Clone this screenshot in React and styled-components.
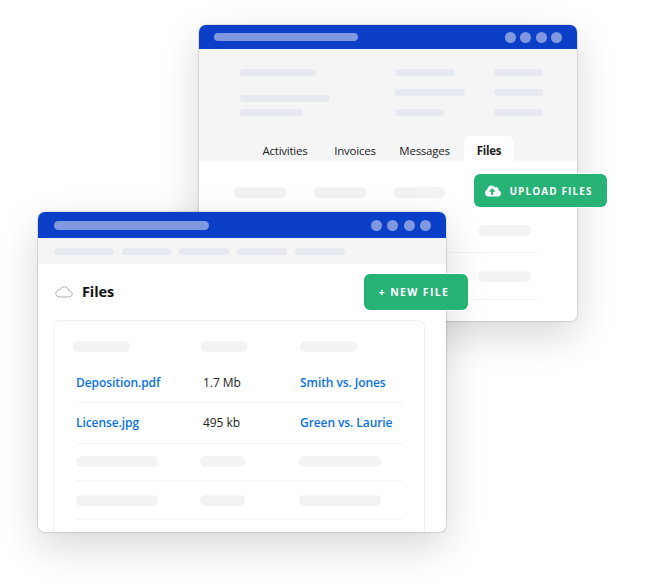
import React from "react";
import styled, { createGlobalStyle } from "styled-components";
import { FaCloudUploadAlt } from "react-icons/fa";

const Global = createGlobalStyle`
  html, body { margin: 0; padding: 0; background: #fff; }
  body { font-family: "Open Sans", "Liberation Sans", sans-serif; }
  * { box-sizing: border-box; }
`;

const Canvas = styled.div`
  position: relative;
  width: 645px;
  height: 585px;
  overflow: hidden;
  background: #fff;
`;

const Win = styled.div`
  position: absolute;
  left: ${(p) => p.$x}px;
  top: ${(p) => p.$y}px;
  width: ${(p) => p.$w}px;
  height: ${(p) => p.$h}px;
  display: flex;
  flex-direction: column;
  background: #fff;
  border-radius: 7px;
  overflow: hidden;
`;

const WinShadow = styled.div`
  position: absolute;
  left: ${(p) => p.$x}px;
  top: ${(p) => p.$y}px;
  width: ${(p) => p.$w}px;
  height: ${(p) => p.$h}px;
  border-radius: 7px;
  box-shadow: 0 0 1.5px rgba(0, 0, 0, 0.5), 0 14px 40px rgba(0, 0, 0, 0.16);
`;

const TitleBar = styled.div`
  flex: none;
  height: ${(p) => p.$h}px;
  display: flex;
  align-items: center;
  justify-content: space-between;
  padding: 0 ${(p) => p.$right}px 0 ${(p) => p.$left}px;
  background: #0c3fc8;
`;

const TitleStub = styled.div`
  width: ${(p) => p.$w}px;
  height: ${(p) => p.$h}px;
  border-radius: 5px;
  background: #7f98e0;
`;

const Dots = styled.div`
  display: flex;
  gap: ${(p) => p.$gap}px;
`;

const Dot = styled.span`
  width: 11px;
  height: 11px;
  border-radius: 50%;
  background: #7f98e0;
`;

const Bar = styled.div`
  flex: none;
  width: ${(p) => p.$w}px;
  height: ${(p) => p.$h || 11}px;
  margin-top: ${(p) => p.$mt || 0}px;
  border-radius: 5.5px;
  background: ${(p) => (p.$blue ? "#e6e9f0" : "#f3f3f3")};
`;

const BackGray = styled.div`
  flex: none;
  height: 112px;
  display: flex;
  flex-direction: column;
  justify-content: space-between;
  background: #f5f5f6;
`;

const Summary = styled.div`
  display: grid;
  grid-template-columns: 155px 99px 1fr;
  padding: 20px 0 0 41px;
`;

const SummaryCol = styled.div`
  display: flex;
  flex-direction: column;
`;

const Tabs = styled.div`
  display: flex;
  align-items: stretch;
  height: 25px;
  padding-left: 50px;
`;

const Tab = styled.div`
  display: flex;
  align-items: center;
  justify-content: center;
  width: ${(p) => p.$w}px;
  margin-left: ${(p) => (p.$active ? 4 : 0)}px;
  padding-top: 3px;
  font-size: 11.5px;
  letter-spacing: -0.25px;
  color: #222;
  font-weight: ${(p) => (p.$active ? 700 : 400)};
  background: ${(p) => (p.$active ? "#fff" : "transparent")};
  border-radius: 6px 6px 0 0;
`;

const BackBody = styled.div`
  flex: 1;
  padding: 26px 36px 0 35px;
`;

const BackRow = styled.div`
  display: grid;
  grid-template-columns: 79.5px 79.5px 85px 1fr;
  padding: ${(p) => p.$pt || 0}px 0 ${(p) => p.$pb}px;
  border-bottom: ${(p) => (p.$line ? "1.5px solid #f6f6f6" : "none")};
`;

const FrontGray = styled.div`
  flex: none;
  height: 26px;
  display: flex;
  align-items: center;
  gap: 8px;
  padding-left: 16px;
  background: #f5f5f6;
`;

const FrontBody = styled.div`
  flex: 1;
  display: flex;
  flex-direction: column;
  min-height: 0;
  padding: 0 21px 0 15px;
`;

const Heading = styled.div`
  flex: none;
  height: 54px;
  margin-bottom: 2px;
  display: flex;
  align-items: center;
  gap: 9px;
  padding-left: 2px;
`;

const HeadingText = styled.h2`
  margin: 0;
  font-size: 14.5px;
  font-weight: 700;
  letter-spacing: -0.1px;
  color: #111;
`;

const Card = styled.div`
  flex: 1;
  border: 1px solid #f1f1f2;
  border-bottom: none;
  border-radius: 7px 7px 0 0;
  padding: 20px 21px 0 21px;
`;

const HeadRow = styled.div`
  display: grid;
  grid-template-columns: 128px 99px 1fr;
  margin: 0 0 0 -2px;
  padding-bottom: 12px;
`;

const Row = styled.div`
  display: grid;
  grid-template-columns: ${(p) => (p.$text ? "127px 97px 1fr" : "124px 99px 1fr")};
  align-items: center;
  height: ${(p) => p.$h}px;
  padding: 0 0 ${(p) => p.$pb || 0}px 1px;
  border-bottom: 1.5px solid #f4f4f4;
`;

const LinkText = styled.a`
  font-size: 12px;
  font-weight: 600;
  color: #0a72e8;
  letter-spacing: -0.08px;
  white-space: nowrap;
`;

const Size = styled.span`
  font-size: 12px;
  letter-spacing: -0.05px;
  color: #222;
  white-space: nowrap;
`;

const GreenButton = styled.button`
  position: absolute;
  left: ${(p) => p.$x}px;
  top: ${(p) => p.$y}px;
  width: ${(p) => p.$w}px;
  height: ${(p) => p.$h}px;
  display: flex;
  align-items: center;
  justify-content: center;
  gap: 8px;
  padding: 0 ${(p) => p.$pr || 0}px 0 0;
  border: none;
  border-radius: 6px;
  background: #27b276;
  box-shadow: 0 0 0 1px rgba(255, 255, 255, 0.75);
  color: #fff;
  font-family: inherit;
  font-size: ${(p) => p.$fs}px;
  font-weight: 700;
  letter-spacing: ${(p) => p.$ls}px;
  white-space: nowrap;
`;

const stub = (n, gap) => (
  <Dots $gap={gap}>
    {Array.from({ length: n }).map((_, i) => (
      <Dot key={i} />
    ))}
  </Dots>
);

const OutlineCloud = () => (
  <svg width="18" height="13" viewBox="0 0 18 13" fill="none">
    <path
      d="M4.2 12h9.6c1.9 0 3.4-1.3 3.4-3 0-1.6-1.3-2.9-3-3-.5-2.4-2.4-4.2-4.8-4.2-1.9 0-3.5 1-4.3 2.7C2.6 4.6 .8 6.3.8 8.3.8 10.4 2.3 12 4.2 12z"
      stroke="#a9adb5"
      strokeWidth="1"
    />
  </svg>
);

export default function App() {
  return (
    <Canvas>
      <Global />
      <WinShadow $x={199} $y={25} $w={378} $h={296} />
      <Win $x={199} $y={25} $w={378} $h={296}>
        <TitleBar $h={24} $left={15} $right={15}>
          <TitleStub $w={144} $h={8} />
          {stub(4, 4.5)}
        </TitleBar>
        <BackGray>
          <Summary>
            <SummaryCol>
              <Bar $blue $w={76} $h={7} />
              <Bar $blue $w={90} $h={7} $mt={19} />
              <Bar $blue $w={63} $h={7} $mt={7} />
            </SummaryCol>
            <SummaryCol>
              <Bar $blue $w={60} $h={7} />
              <Bar $blue $w={70} $h={7} $mt={13} />
              <Bar $blue $w={49} $h={7} $mt={13} />
            </SummaryCol>
            <SummaryCol>
              <Bar $blue $w={49} $h={7} />
              <Bar $blue $w={49} $h={7} $mt={13} />
              <Bar $blue $w={49} $h={7} $mt={13} />
            </SummaryCol>
          </Summary>
          <Tabs>
            <Tab $w={72}>Activities</Tab>
            <Tab $w={68}>Invoices</Tab>
            <Tab $w={71}>Messages</Tab>
            <Tab $w={50} $active>Files</Tab>
          </Tabs>
        </BackGray>
        <BackBody>
          <BackRow $pb={27}>
            <Bar $w={53} />
            <Bar $w={53} />
            <Bar $w={52} />
            <Bar $w={53} />
          </BackRow>
          <BackRow $pb={16} $line>
            <Bar $w={53} />
            <Bar $w={53} />
            <Bar $w={52} />
            <Bar $w={53} />
          </BackRow>
          <BackRow $pt={18} $pb={17} $line>
            <Bar $w={53} />
            <Bar $w={53} />
            <Bar $w={52} />
            <Bar $w={53} />
          </BackRow>
        </BackBody>
      </Win>
      <GreenButton $x={474} $y={174} $w={133} $h={33} $fs={10} $ls={1.1} $pr={3}>
        <FaCloudUploadAlt size={16} />
        UPLOAD FILES
      </GreenButton>

      <WinShadow $x={38} $y={212} $w={408} $h={320} />
      <Win $x={38} $y={212} $w={408} $h={320}>
        <TitleBar $h={26} $left={16} $right={15}>
          <TitleStub $w={155} $h={9} />
          {stub(4, 5.5)}
        </TitleBar>
        <FrontGray>
          <Bar $blue $w={60} $h={7} />
          <Bar $blue $w={49} $h={7} />
          <Bar $blue $w={50} $h={7} />
          <Bar $blue $w={50} $h={7} />
          <Bar $blue $w={50} $h={7} />
        </FrontGray>
        <FrontBody>
          <Heading>
            <OutlineCloud />
            <HeadingText>Files</HeadingText>
          </Heading>
          <Card>
            <HeadRow>
              <Bar $w={57} />
              <Bar $w={46} />
              <Bar $w={57} />
            </HeadRow>
            <Row $text $h={39} $pb={2}>
              <LinkText>Deposition.pdf</LinkText>
              <Size>1.7 Mb</Size>
              <LinkText>Smith vs. Jones</LinkText>
            </Row>
            <Row $text $h={40.5}>
              <LinkText>License.jpg</LinkText>
              <Size>495 kb</Size>
              <LinkText>Green vs. Laurie</LinkText>
            </Row>
            <Row $h={37.5}>
              <Bar $w={82} />
              <Bar $w={45} />
              <Bar $w={82} />
            </Row>
            <Row $h={39}>
              <Bar $w={82} />
              <Bar $w={45} />
              <Bar $w={82} />
            </Row>
          </Card>
        </FrontBody>
      </Win>
      <GreenButton $x={364} $y={274} $w={104} $h={36} $fs={10.5} $ls={1.35} $pr={4}>
        + NEW FILE
      </GreenButton>
    </Canvas>
  );
}
